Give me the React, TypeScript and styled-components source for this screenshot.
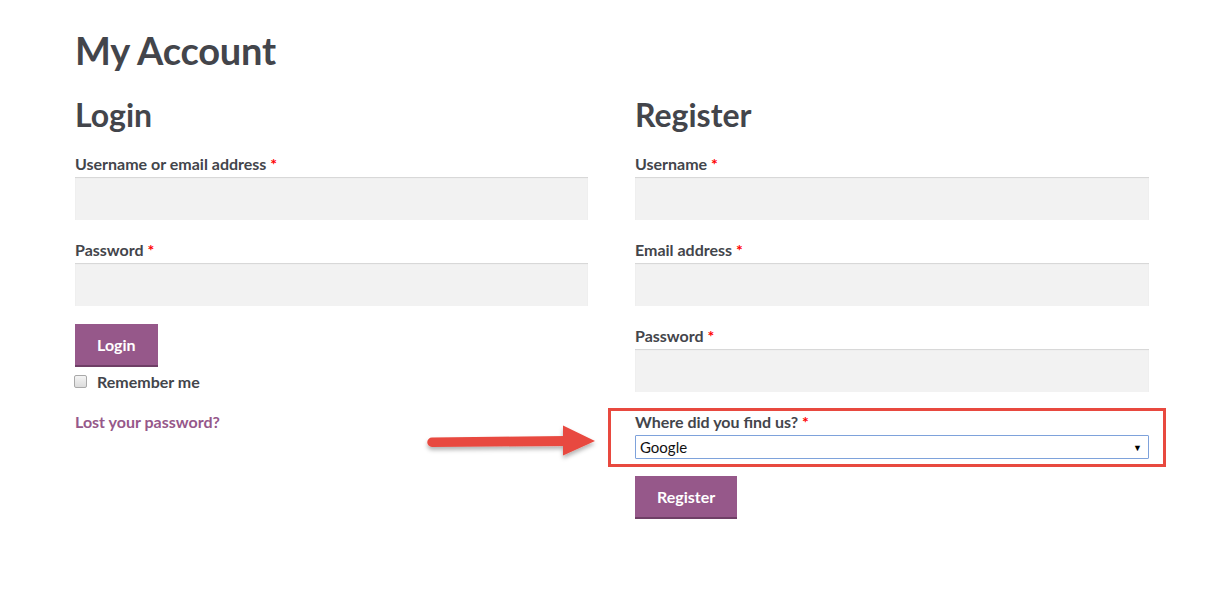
import React from "react";
import styled, { createGlobalStyle } from "styled-components";

const Global = createGlobalStyle`
  html, body { margin: 0; padding: 0; background: #ffffff; }
  body { font-family: "Lato", "Open Sans", sans-serif; color: #43454b; }
  * { box-sizing: border-box; }
`;

const Page = styled.div`
  position: relative;
  width: 1216px;
  height: 603px;
  padding: 26px 0 0 75px;
`;

const Title = styled.h1`
  margin: 0;
  font-size: 38px;
  line-height: 48px;
  font-weight: 700;
  color: #43454b;
  letter-spacing: -0.2px;
`;

const Columns = styled.div`
  display: grid;
  grid-template-columns: 513px 514px;
  column-gap: 47px;
  margin-top: 21px;
`;

const Column = styled.div`
  display: flex;
  flex-direction: column;
`;

const Heading = styled.h2`
  margin: 0 0 19px;
  font-size: 32px;
  line-height: 40px;
  font-weight: 700;
  color: #43454b;
`;

const Field = styled.div<{ $gap?: number }>`
  position: relative;
  display: flex;
  flex-direction: column;
  margin-bottom: ${(p) => (p.$gap ?? 20)}px;
`;

const Label = styled.label`
  display: block;
  font-size: 16px;
  line-height: 20px;
  font-weight: 700;
  color: #43454b;
  margin-bottom: 3px;
`;

const Req = styled.span`
  color: #ff0000;
  font-weight: 700;
`;

const Input = styled.div`
  height: 43px;
  background: #f2f2f2;
  box-shadow: inset 0 1px 1px rgba(0, 0, 0, 0.12);
`;

const Button = styled.button`
  align-self: flex-start;
  height: 43px;
  padding: 0 22px;
  border: none;
  border-bottom: 2px solid #6f3f66;
  background: #96588a;
  color: #ffffff;
  font-family: inherit;
  font-size: 16px;
  font-weight: 700;
  cursor: pointer;
`;

const CheckRow = styled.label`
  display: flex;
  align-items: center;
  gap: 10px;
  height: 20px;
  margin-top: 4px;
  margin-left: -1px;
  font-size: 16px;
  font-weight: 700;
  color: #43454b;
`;

const Check = styled.span`
  width: 13px;
  height: 13px;
  border: 1px solid #a9a9a9;
  border-radius: 2px;
  background: linear-gradient(#f4f4f4, #dcdcdc);
`;

const LostLink = styled.a`
  margin-top: 21px;
  font-size: 16px;
  line-height: 20px;
  font-weight: 700;
  color: #96588a;
  text-decoration: none;
`;

const Select = styled.div`
  height: 24px;
  border: 1px solid #7ea2db;
  border-radius: 1px;
  background: #ffffff;
  display: flex;
  align-items: center;
  justify-content: space-between;
  padding: 0 6px 0 4px;
  font-size: 15px;
  font-weight: 400;
  color: #111;
`;

const Caret = styled.span`
  font-size: 9px;
  color: #000;
`;

const Highlight = styled.div`
  position: absolute;
  left: -27px;
  top: -4px;
  width: 558px;
  height: 59px;
  border: 3.5px solid #e8493f;
  pointer-events: none;
`;

const Arrow = styled.svg`
  position: absolute;
  left: 420px;
  top: 420px;
  overflow: visible;
`;

export default function App() {
  return (
    <>
      <Global />
      <Page>
        <Title>My Account</Title>
        <Columns>
          <Column>
            <Heading>Login</Heading>
            <Field>
              <Label>
                Username or email address <Req>*</Req>
              </Label>
              <Input />
            </Field>
            <Field $gap={18}>
              <Label>
                Password <Req>*</Req>
              </Label>
              <Input />
            </Field>
            <Button>Login</Button>
            <CheckRow>
              <Check />
              Remember me
            </CheckRow>
            <LostLink>Lost your password?</LostLink>
          </Column>
          <Column>
            <Heading>Register</Heading>
            <Field>
              <Label>
                Username <Req>*</Req>
              </Label>
              <Input />
            </Field>
            <Field>
              <Label>
                Email address <Req>*</Req>
              </Label>
              <Input />
            </Field>
            <Field>
              <Label>
                Password <Req>*</Req>
              </Label>
              <Input />
            </Field>
            <Field $gap={17}>
              <Label>
                Where did you find us? <Req>*</Req>
              </Label>
              <Select>
                <span>Google</span>
                <Caret>▼</Caret>
              </Select>
              <Highlight />
            </Field>
            <Button>Register</Button>
          </Column>
        </Columns>
        <Arrow width="180" height="40" viewBox="0 0 180 40">
          <defs>
            <filter id="sh" x="-10%" y="-50%" width="120%" height="200%">
              <feDropShadow dx="0" dy="3" stdDeviation="2" floodColor="#000" floodOpacity="0.3" />
            </filter>
          </defs>
          <g filter="url(#sh)">
            <path d="M12 17.5 L146 16 L146 26 L12 27 A4.75 4.75 0 0 1 12 17.5 Z" fill="#e8493f" />
            <polygon points="143,5.5 175,21 143,35.5" fill="#e8493f" />
          </g>
        </Arrow>
      </Page>
    </>
  );
}
